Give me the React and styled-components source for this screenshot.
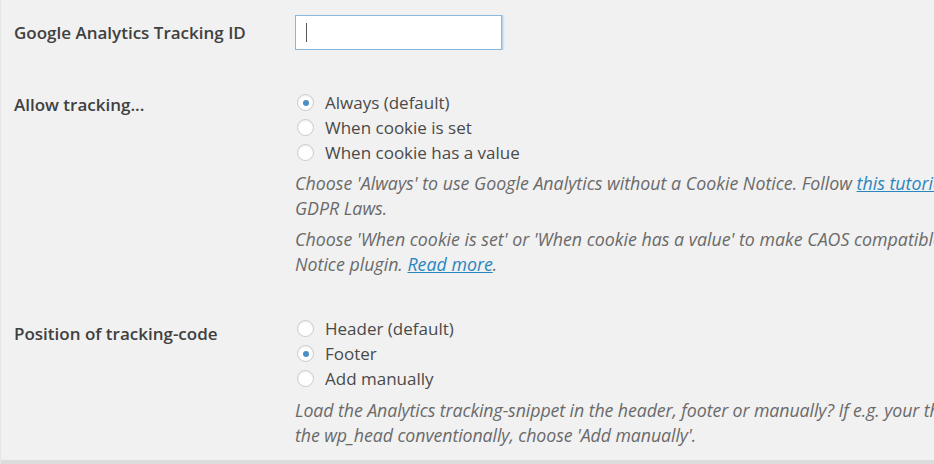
import styled, { createGlobalStyle } from "styled-components";

const Global = createGlobalStyle`
  html, body {
    margin: 0;
    padding: 0;
    background: #f1f1f1;
  }
  body {
    font-family: "Open Sans", "Noto Sans", sans-serif;
    color: #444;
  }
`;

const trackingOptions = [
  { label: "Always (default)", checked: true },
  { label: "When cookie is set" },
  { label: "When cookie has a value" },
];

const positionOptions = [
  { label: "Header (default)" },
  { label: "Footer", checked: true },
  { label: "Add manually" },
];

const RadioList = ({ options }) => (
  <Radios>
    {options.map((opt) => (
      <RadioRow key={opt.label}>
        <Radio $checked={opt.checked} />
        <span>{opt.label}</span>
      </RadioRow>
    ))}
  </Radios>
);

const App = () => {
  return (
    <>
      <Global />
      <Page>
        <FormTable>
          <Row $pad="15px 0 0">
            <Label $top="7px">Google Analytics Tracking ID</Label>
            <Field>
              <TextInput>
                <Caret />
              </TextInput>
            </Field>
          </Row>

          <Row $pad="40px 0 0">
            <Label $top="4px">Allow tracking...</Label>
            <Field>
              <RadioList options={trackingOptions} />
              <Description>
                <p>
                  Choose 'Always' to use Google Analytics without a Cookie Notice. Follow{" "}
                  <Link>this tutorial</Link> to comply with
                  <br />
                  GDPR Laws.
                </p>
                <p>
                  Choose 'When cookie is set' or 'When cookie has a value' to make CAOS compatible with your Cookie
                  <br />
                  Notice plugin. <Link>Read more</Link>.
                </p>
              </Description>
            </Field>
          </Row>

          <Row $pad="33px 0 0">
            <Label $top="7px">Position of tracking-code</Label>
            <Field>
              <RadioList options={positionOptions} />
              <Description $tight>
                <p>
                  Load the Analytics tracking-snippet in the header, footer or manually? If e.g. your theme doesn't load
                  <br />
                  the wp_head conventionally, choose 'Add manually'.
                </p>
              </Description>
            </Field>
          </Row>
        </FormTable>
        <BottomEdge />
      </Page>
    </>
  );
};

export default App;

const Page = styled.div`
  width: 934px;
  height: 464px;
  overflow: hidden;
  display: flex;
  flex-direction: column;
  border-left: 1px solid #e6e6e6;
  box-sizing: border-box;
`;

const FormTable = styled.div`
  flex: 1;
  display: flex;
  flex-direction: column;
`;

const Row = styled.div`
  display: grid;
  grid-template-columns: 294px 1fr;
  padding: ${(p) => p.$pad};
`;

const Label = styled.div`
  padding: ${(p) => p.$top} 0 0 13px;
  font-size: 17px;
  font-weight: 600;
  color: #404040;
  line-height: 22px;
  white-space: nowrap;
`;

const Field = styled.div`
  min-width: 0;
  overflow: hidden;
`;

const TextInput = styled.div`
  width: 207px;
  height: 35px;
  box-sizing: border-box;
  background: #fff;
  border: 1px solid #86b8e0;
  box-shadow: 0 0 2px 1px rgba(91, 157, 217, 0.5);
  display: flex;
  align-items: center;
  padding-left: 10px;
`;

const Caret = styled.span`
  width: 1px;
  height: 19px;
  background: #555;
`;

const Radios = styled.div`
  display: flex;
  flex-direction: column;
`;

const RadioRow = styled.div`
  display: flex;
  align-items: center;
  height: 25px;
  gap: 11px;
  font-size: 17px;
  color: #4a4a4a;
  white-space: nowrap;
`;

const Radio = styled.span`
  width: 17px;
  height: 17px;
  margin-left: 2px;
  box-sizing: border-box;
  border-radius: 50%;
  border: 1px solid #c8cbce;
  background: #fff;
  box-shadow: inset 0 1px 2px rgba(0, 0, 0, 0.08);
  display: flex;
  align-items: center;
  justify-content: center;
  flex-shrink: 0;
  &::after {
    content: "";
    display: ${(p) => (p.$checked ? "block" : "none")};
    width: 6px;
    height: 6px;
    border-radius: 50%;
    background: #4d8fc4;
  }
`;

const Description = styled.div`
  margin-top: ${(p) => (p.$tight ? "7px" : "6px")};
  font-size: 17.8px;
  font-style: italic;
  color: #6a6a6a;
  line-height: 25px;
  letter-spacing: ${(p) => (p.$tight ? "-0.1px" : "0")};
  white-space: nowrap;
  p {
    margin: 0 0 6px;
  }
`;

const Link = styled.span`
  color: #2a86bf;
  text-decoration: underline;
`;

const BottomEdge = styled.div`
  height: 4px;
  background: #dcdcdc;
`;
